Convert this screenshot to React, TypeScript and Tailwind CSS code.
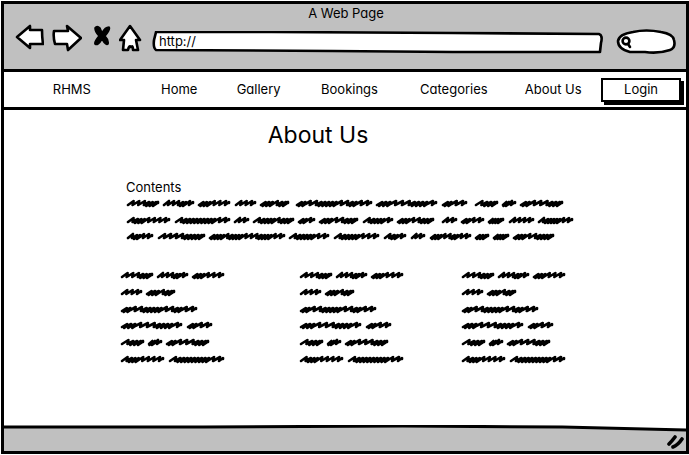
import React from "react";

type Word = [start: number, width: number, strokes: string];

/* Strokes of a scribbled word: "l" is a loose, high stroke, "h" a dense, low one. */
function scribble([start, width, strokes]: Word, middle: number): string {
  const units = [...strokes].reduce((n, s) => n + (s === "l" ? 5 : 3), 0);
  const scale = (width - 5) / units;
  let x = start + 1;
  let d = `M${x} ${middle + 2}`;
  for (const s of strokes) {
    const step = (s === "l" ? 5 : 3) * scale;
    if (s === "l") {
      d += `L${x + step} ${middle - 2}L${x + step - 1} ${middle + 2}`;
    } else {
      d += `L${x + step + 1} ${middle - 1}L${x + step - 2} ${middle + 3}L${x + step + 1} ${middle + 1}`;
    }
    x += step;
  }
  return d + `L${x + 3} ${middle - 1}L${x + 3} ${middle}`;
}

function Scribble({ lines, middles, width, height, label }: {
  lines: Word[][];
  middles: number[];
  width: number;
  height: number;
  label: string;
}) {
  return (
    <svg role="img" aria-label={label} width={width} height={height} viewBox={`0 0 ${width} ${height}`}
      fill="none" stroke="black" strokeWidth="2.6" strokeLinecap="round" strokeLinejoin="round" className="shrink-0">
      {lines.map((words, i) => (
        <path key={i} d={words.map((w) => scribble(w, middles[i])).join("")} />
      ))}
    </svg>
  );
}

const paragraph: Word[][] = [
  [
    [1, 32, "lllhhh"], [37, 31, "lllhhl"], [72, 32, "hhhlll"], [109, 21, "lll"], [134, 29, "hhhlhh"],
    [170, 76, "hhllhhhhhllhhll"], [250, 61, "hhhlllhhhhl"], [316, 25, "hhll"], [349, 23, "lhhh"],
    [376, 14, "hhl"], [394, 43, "hhlllhhh"],
  ],
  [
    [1, 43, "lhhhllll"], [49, 55, "lhhhhhhhhhll"], [108, 15, "ll"], [127, 41, "lhhhhlhhh"], [172, 17, "hhl"],
    [193, 39, "hhhllhhh"], [237, 30, "lhhhhl"], [271, 37, "hhhllhhh"], [316, 15, "ll"], [335, 23, "hhll"],
    [362, 16, "hhhh"], [383, 25, "llll"], [412, 35, "lhhhhhll"],
  ],
  [
    [1, 26, "lhhll"], [32, 47, "llllhhhhh"], [83, 76, "hhhhlhhhhlllhhhhll"], [163, 40, "lhhhhhll"],
    [208, 45, "lhhhhhlll"], [258, 22, "lhhl"], [285, 14, "ll"], [304, 41, "hhhllhhll"], [349, 14, "hhh"],
    [367, 16, "hhhh"], [387, 41, "hhhllhhhh"],
  ],
];

const column: Word[][] = [
  [[1, 32, "lllhhh"], [37, 31, "lllhhl"], [72, 32, "hhhlll"]],
  [[1, 21, "lll"], [26, 29, "hhhlhh"]],
  [[1, 76, "hhllhhhhhllhhll"]],
  [[1, 61, "hhhlllhhhhl"], [67, 25, "hhll"]],
  [[1, 23, "lhhh"], [28, 14, "hhl"], [46, 43, "hhlllhhh"]],
  [[1, 43, "lhhhllll"], [49, 55, "lhhhhhhhhhll"]],
];

const ink = { fill: "white", stroke: "black", strokeWidth: 2.6, strokeLinejoin: "round" as const };

function Toolbar() {
  return (
    <header className="h-[68px] border-b-3 border-black bg-[#c0c0c0] pl-[10px] pr-2">
      <div className="pt-px text-center leading-4">A Web Page</div>
      <div className="flex items-center">
        <button type="button" aria-label="Back" className="mr-2">
          <svg width="30" height="30" viewBox="0 1 30 30" {...ink}>
            <path d="M3 14 16 3 16 7 28 7Q28 14 29 21L16 21 16 25Z" />
          </svg>
        </button>
        <button type="button" aria-label="Forward" className="mr-[11px]">
          <svg width="30" height="30" viewBox="0 1 30 30" {...ink}>
            <path d="M2 8 16 8 15 3 29 15 16 27 15 21 3 21Q1 14 2 8Z" />
          </svg>
        </button>
        <button type="button" aria-label="Stop" className="mr-2">
          <svg width="18" height="30" viewBox="0 2 18 30" stroke="black" strokeWidth="1.6" strokeLinejoin="round">
            <path d="M2 6Q4 3 7 6L9 11Q12 5 16 5 18 7 12 14 16 18 15 22 13 24 9 17 5 24 2 22 1 20 6 14 2 10 2 6Z" />
          </svg>
        </button>
        <button type="button" aria-label="Home" className="mr-2">
          <svg width="24" height="30" viewBox="1 0 24 30" {...ink}>
            <path d="M12 2 22 16 18 16 20 26 15 26Q15 21 13 23 11 21 10 26L5 26 6 16 2 16Z" />
          </svg>
        </button>
        <div className="relative mt-2 h-6 flex-1">
          <svg aria-hidden="true" className="absolute inset-0 h-full w-full" viewBox="0 0 450 24" preserveAspectRatio="none" {...ink}>
            <path d="M5 1 120 1 300 2 445 3Q449 4 447 12L446 21 300 21 180 20 5 19Q2 17 3 9Z" />
          </svg>
          <input aria-label="Address" defaultValue="http://" className="relative h-5 w-full bg-transparent pl-2 outline-none" />
        </div>
        <div className="relative ml-3 mt-2 h-7 w-[62px]">
          <svg aria-hidden="true" className="absolute inset-0" width="62" height="28" viewBox="0 1 62 28" {...ink}>
            <path d="M2 13Q3 6 17 4 30 1 45 4 57 6 58 12 60 20 54 22 42 26 29 24L14 24Q2 21 2 13Z" />
            <circle cx="10" cy="13" r="3.4" />
            <path d="M12 16 14 19" strokeLinecap="round" />
          </svg>
          <input aria-label="Search" className="relative h-7 w-full bg-transparent pl-5 pr-2 outline-none" />
        </div>
      </div>
    </header>
  );
}

const links = ["Home", "Gallery", "Bookings", "Categories", "About Us"];

export default function App() {
  return (
    <div className="flex min-h-screen flex-col bg-white pl-px pt-px font-['Inter','Liberation_Sans',sans-serif] text-[13px] text-black [font-feature-settings:'cv11']">
      <div className="mb-px flex flex-1 flex-col border-3 border-black">
        <Toolbar />
        <nav className="grid h-[38px] grid-cols-[136fr_79fr_80fr_102fr_107fr_92fr_87fr] items-center border-b-3 border-black text-center">
          <a href="#rhms">RHMS</a>
          {links.map((name) => (
            <a key={name} href={"#" + name}>{name}</a>
          ))}
          <button type="button" className="mr-[5px] ml-[2px] h-6 border-2 border-black bg-white shadow-[3px_3px_0_black]">
            Login
          </button>
        </nav>
        <main className="flex-1">
          <h1 className="pr-[54px] pt-[9px] text-center text-[23px] leading-8">About Us</h1>
          <section className="pl-[122px] pt-[27px]">
            <h2 className="leading-[18px]">Contents</h2>
            <Scribble label="Introduction" lines={paragraph} middles={[7, 24, 40]} width={450} height={48} />
          </section>
          <section className="grid grid-cols-[179fr_161fr_225fr] pl-[116px] pt-6">
            {["First column", "Second column", "Third column"].map((label) => (
              <Scribble key={label} label={label} lines={column} middles={[7, 24, 41, 57, 74, 91]} width={106} height={100} />
            ))}
          </section>
        </main>
        <footer className="relative h-[26px]">
          <svg aria-hidden="true" className="absolute inset-0 h-full w-full" viewBox="0 0 684 26" preserveAspectRatio="none">
            <path d="M-3 2 200 2 400 1 560 2 687 5V29H-3Z" fill="#c0c0c0" stroke="black" strokeWidth="3" />
          </svg>
          <svg aria-hidden="true" className="absolute bottom-0 right-0" width="20" height="16" viewBox="0 0 20 16" fill="none" stroke="black" strokeWidth="3.6" strokeLinecap="round">
            <path d="M3 9Q6 6 9 2M7 12Q12 10 16 4" />
          </svg>
        </footer>
      </div>
    </div>
  );
}
